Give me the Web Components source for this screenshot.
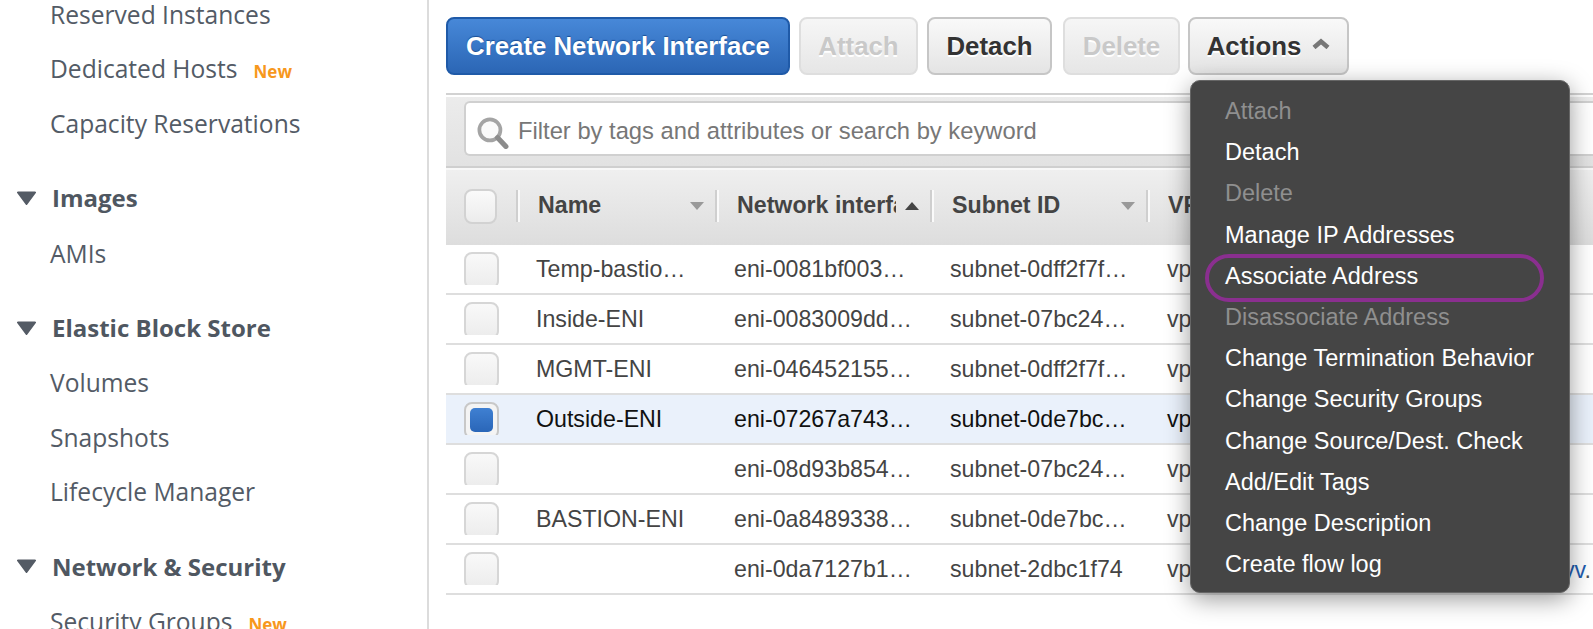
<!DOCTYPE html>
<html>
<head>
<meta charset="utf-8">
<title>Network Interfaces</title>
<style>
  html, body { margin: 0; height: 100%; overflow: hidden; background: #fff; }
  body { display: flex; font-family: "Liberation Sans", Arial, sans-serif; }
</style>
</head>
<body>
<aws-side-nav>
  <aws-nav-item>Reserved Instances</aws-nav-item>
  <aws-nav-item badge>Dedicated Hosts</aws-nav-item>
  <aws-nav-item>Capacity Reservations</aws-nav-item>
  <aws-nav-group>Images</aws-nav-group>
  <aws-nav-item>AMIs</aws-nav-item>
  <aws-nav-group>Elastic Block Store</aws-nav-group>
  <aws-nav-item>Volumes</aws-nav-item>
  <aws-nav-item>Snapshots</aws-nav-item>
  <aws-nav-item>Lifecycle Manager</aws-nav-item>
  <aws-nav-group>Network &amp; Security</aws-nav-group>
  <aws-nav-item badge>Security Groups</aws-nav-item>
</aws-side-nav>

<aws-main>
  <aws-toolbar>
    <aws-button kind="primary" style="width:344px;margin-right:9px">Create Network Interface</aws-button>
    <aws-button kind="disabled" style="width:119px;margin-right:9px">Attach</aws-button>
    <aws-button style="width:125px;margin-right:11px">Detach</aws-button>
    <aws-button kind="disabled" style="width:117px;margin-right:8px">Delete</aws-button>
    <aws-button caret style="width:161px">Actions</aws-button>
  </aws-toolbar>

  <aws-filter-bar>Filter by tags and attributes or search by keyword</aws-filter-bar>

  <aws-table-head></aws-table-head>
  <aws-table-row name="Temp-bastio…" eni="eni-0081bf003…" subnet="subnet-0dff2f7f…"></aws-table-row>
  <aws-table-row name="Inside-ENI" eni="eni-0083009dd…" subnet="subnet-07bc24…"></aws-table-row>
  <aws-table-row name="MGMT-ENI" eni="eni-046452155…" subnet="subnet-0dff2f7f…"></aws-table-row>
  <aws-table-row selected name="Outside-ENI" eni="eni-07267a743…" subnet="subnet-0de7bc…"></aws-table-row>
  <aws-table-row eni="eni-08d93b854…" subnet="subnet-07bc24…"></aws-table-row>
  <aws-table-row name="BASTION-ENI" eni="eni-0a8489338…" subnet="subnet-0de7bc…"></aws-table-row>
  <aws-table-row eni="eni-0da7127b1…" subnet="subnet-2dbc1f74" link="yv"></aws-table-row>

  <aws-actions-menu>
    <aws-menu-item disabled>Attach</aws-menu-item>
    <aws-menu-item>Detach</aws-menu-item>
    <aws-menu-item disabled>Delete</aws-menu-item>
    <aws-menu-item>Manage IP Addresses</aws-menu-item>
    <aws-menu-item circled>Associate Address</aws-menu-item>
    <aws-menu-item disabled>Disassociate Address</aws-menu-item>
    <aws-menu-item>Change Termination Behavior</aws-menu-item>
    <aws-menu-item>Change Security Groups</aws-menu-item>
    <aws-menu-item>Change Source/Dest. Check</aws-menu-item>
    <aws-menu-item>Add/Edit Tags</aws-menu-item>
    <aws-menu-item>Change Description</aws-menu-item>
    <aws-menu-item>Create flow log</aws-menu-item>
  </aws-actions-menu>
</aws-main>

<script>
// small helper, every element below just sets its shadow html once
class ShadowEl extends HTMLElement {
  connectedCallback() {
    if (this.shadowRoot) return;
    this.attachShadow({ mode: "open" });
    this.shadowRoot.innerHTML = this.render();
  }
}

class AwsSideNav extends ShadowEl {
  render() {
    return `<style>
      :host { display: block; flex: 0 0 427px; height: 100%; border-right: 2px solid #dcdcdc; overflow: hidden;
        font-family: "Open Sans", sans-serif; font-size: 24px; color: #535b66; }
      .inner { margin-top: -13px; }
    </style><div class="inner"><slot></slot></div>`;
  }
}

class AwsNavItem extends ShadowEl {
  render() {
    const badge = this.hasAttribute("badge") ? `<span class="new">New</span>` : "";
    return `<style>
      :host { display: flex; align-items: center; height: 54.5px; padding-left: 50px; white-space: nowrap; font-size: 24.6px; }
      .new { color: #f7981d; font-weight: 700; font-size: 17px; margin-left: 16px; position: relative; top: 3px; }
    </style><slot></slot>${badge}`;
  }
}

class AwsNavGroup extends ShadowEl {
  render() {
    return `<style>
      :host { display: flex; align-items: center; height: 56px; margin-top: 19.25px; padding-left: 17px; font-weight: 700; color: #4f5761; white-space: nowrap; }
      svg { width: 19px; height: 14px; margin-right: 16px; flex: none; }
    </style><svg viewBox="0 0 19 14"><path d="M1 0.5h17a1 1 0 0 1 .8 1.6L10.3 13.4a1 1 0 0 1-1.6 0L.2 2.1A1 1 0 0 1 1 .5z" fill="#545b65"/></svg><slot></slot>`;
  }
}

class AwsMain extends ShadowEl {
  render() {
    return `<style>
      :host { display: block; flex: 1; min-width: 0; position: relative; padding-left: 17px; }
    </style><slot></slot>`;
  }
}

class AwsToolbar extends ShadowEl {
  render() {
    return `<style>
      :host { display: flex; padding-top: 17px; height: 58px; margin-bottom: 18px; }
    </style><slot></slot>`;
  }
}

class AwsButton extends ShadowEl {
  render() {
    const caret = this.hasAttribute("caret")
      ? `<svg viewBox="0 0 18 11"><path d="M2 9.5L9 3.5l7 6" fill="none" stroke="#777" stroke-width="4.5" stroke-linejoin="miter"/></svg>`
      : "";
    return `<style>
      :host { display: flex; align-items: center; justify-content: center; box-sizing: border-box; height: 58px;
        border: 2px solid #c6c6c6; border-radius: 8px; white-space: nowrap;
        background: linear-gradient(#f9f9f9, #e4e4e4); color: #333; font-size: 25.8px; font-weight: 700;
        text-shadow: 0 2px 0 #fff; }
      :host([kind="primary"]) { border-color: #1f5aa8; color: #fff; text-shadow: 0 -1px 1px #1c4f94;
        background: linear-gradient(#4788d8, #2b66b5); }
      :host([kind="disabled"]) { border-color: #dedede; color: #c9c9c9; background: linear-gradient(#f6f6f6, #e6e6e6); }
      svg { width: 18px; height: 11px; margin: -6px 0 0 11px; }
    </style><slot></slot>${caret}`;
  }
}

class AwsFilterBar extends ShadowEl {
  render() {
    return `<style>
      :host { display: block; box-sizing: border-box; height: 75px; padding: 6px 0 11px 18px; border-top: 2px solid #d2d2d2;
        border-bottom: 2px solid #cfcfcf; background: linear-gradient(#ececec, #e2e2e2); box-shadow: 0 2px 0 #fff inset; }
      .field { display: flex; align-items: center; box-sizing: border-box; height: 55px; background: #fff;
        border: 2px solid #d0d0d0; border-right: 0; border-radius: 6px 0 0 6px; padding: 5px 0 0 11px;
        font-size: 23.76px; color: #777; white-space: nowrap; }
      svg { width: 32px; height: 32px; margin: 3px 9px 0 0; flex: none; }
    </style>
    <div class="field">
      <svg viewBox="0 0 31 31">
        <circle cx="12.5" cy="12.5" r="10.2" fill="#fafafa" stroke="#a4a4a4" stroke-width="3.6"/>
        <path d="M20 20l8 8.5" stroke="#8c8c8c" stroke-width="5" stroke-linecap="round"/>
      </svg>
      <slot></slot>
    </div>`;
  }
}

const COLUMNS = "71px 199px 215px 216px 1fr";

class AwsCheckbox extends ShadowEl {
  render() {
    return `<style>
      :host { display: block; }
      .box { box-sizing: border-box; width: 33px; height: 35px; border: 2px solid #d2d2d2; border-radius: 8px;
        background: linear-gradient(#fafafa, #ececec); }
    </style><div class="box"></div>`;
  }
}

class AwsTableHead extends ShadowEl {
  render() {
    const caret = (up, c) => `<svg class="caret" viewBox="0 0 16 10"><path d="${up ? "M8 1l7 8H1z" : "M1 1h14l-7 8z"}" fill="${c}"/></svg>`;
    const col = (label, up, c) => `<div class="col"><span class="label">${label}</span>${c ? caret(up, c) : ""}</div>`;
    return `<style>
      :host { display: grid; grid-template-columns: ${COLUMNS}; align-items: center; height: 77px; box-sizing: border-box;
        border-top: 2px solid #f8f8f8;
        background: linear-gradient(#efefef, #dddddd); font-size: 23.2px; font-weight: 700; color: #444; white-space: nowrap; }
      .check { padding-left: 18px; margin-top: -2px; }
      .col { display: flex; align-items: center; box-sizing: border-box; height: 32px; margin-top: -4px; padding: 0 11px 0 18px;
        border-left: 2px solid #fafafa; box-shadow: -2px 0 0 #cfcfcf; margin-left: 1px; min-width: 0; }
      .label { flex: 1; overflow: hidden; }
      .caret { width: 16px; height: 10px; flex: none; margin-left: 8px; }
    </style>
    <div class="check"><aws-checkbox></aws-checkbox></div>
    ${col("Name", false, "#999")}
    ${col("Network interface Id", true, "#444")}
    ${col("Subnet ID", false, "#999")}
    ${col("VPC ID")}`;
  }
}

class AwsTableRow extends ShadowEl {
  render() {
    const a = (n) => this.getAttribute(n) || "";
    const link = a("link") ? `<div class="link"><b>${a("link")}</b>.</div>` : "";
    return `<style>
      :host { display: grid; grid-template-columns: ${COLUMNS}; align-items: center; position: relative; height: 50px;
        box-sizing: border-box; border-bottom: 2px solid #dedede; background: #fff; font-size: 23.2px; color: #444; white-space: nowrap; }
      :host([selected]) { background: #eaf1fb; color: #111; }
      .check { align-self: start; padding: 7px 0 0 18px; }
      .clip { width: 35px; height: 33px; overflow: hidden; }
      .box { box-sizing: border-box; width: 35px; height: 37px; border: 2px solid #d6d6d6; border-radius: 8px;
        background: linear-gradient(#f9f9f9, #ececec); padding: 4px; }
      .dot { display: none; width: 23px; height: 24px; border-radius: 5px; background: linear-gradient(#3f80d2, #2a66b8); }
      :host([selected]) .box { background: #f4f4f4; border-color: #c8c8c8; }
      :host([selected]) .dot { display: block; }
      .cell { padding-left: 19px; }
      .cell.eni { padding-left: 18px; }
      .cell.vpc { padding-left: 20px; }
      .link { position: absolute; left: 1117px; top: 12px; color: #555; }
      .link b { font-weight: 400; color: #1f5db0; }
    </style>
    <div class="check"><div class="clip"><div class="box"><div class="dot"></div></div></div></div>
    <div class="cell">${a("name")}</div>
    <div class="cell eni">${a("eni")}</div>
    <div class="cell">${a("subnet")}</div>
    <div class="cell vpc">vpc</div>
    ${link}`;
  }
}

class AwsActionsMenu extends ShadowEl {
  render() {
    return `<style>
      :host { display: block; position: absolute; z-index: 10; left: 761px; top: 80px; width: 380px; height: 513px; box-sizing: border-box;
        padding: 10px 0 0 34px; background: #454545; border-radius: 10px; border: 1px solid #666;
        box-shadow: 0 6px 24px rgba(0,0,0,.4); font-size: 23.5px; color: #fff; }
    </style><slot></slot>`;
  }
}

class AwsMenuItem extends ShadowEl {
  render() {
    const ring = this.hasAttribute("circled") ? `<div class="ring"></div>` : "";
    return `<style>
      :host { display: block; position: relative; height: 41.2px; line-height: 41.2px; white-space: nowrap; }
      :host([disabled]) { color: #8f8f8f; }
      .ring { position: absolute; left: -20px; right: 25px; top: -2px; height: 40px; border: 4px solid #8a2f8f; border-radius: 24px; }
    </style><slot></slot>${ring}`;
  }
}

customElements.define("aws-side-nav", AwsSideNav);
customElements.define("aws-nav-item", AwsNavItem);
customElements.define("aws-nav-group", AwsNavGroup);
customElements.define("aws-main", AwsMain);
customElements.define("aws-toolbar", AwsToolbar);
customElements.define("aws-button", AwsButton);
customElements.define("aws-filter-bar", AwsFilterBar);
customElements.define("aws-checkbox", AwsCheckbox);
customElements.define("aws-table-head", AwsTableHead);
customElements.define("aws-table-row", AwsTableRow);
customElements.define("aws-actions-menu", AwsActionsMenu);
customElements.define("aws-menu-item", AwsMenuItem);
</script>
</body>
</html>
